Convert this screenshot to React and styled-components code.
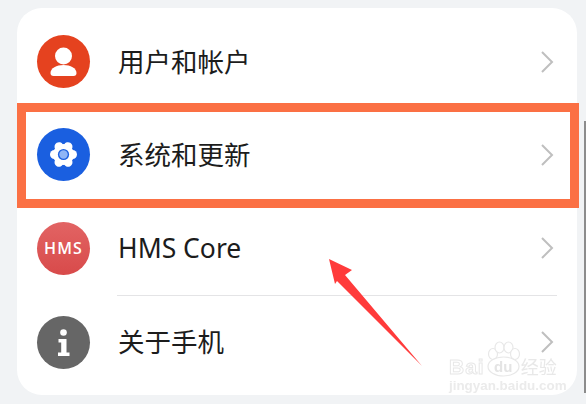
import React from 'react'
import styled, { createGlobalStyle } from 'styled-components'

// STYLES //
const GlobalStyle = createGlobalStyle`
  html, body {
    margin: 0;
    padding: 0;
    background: #f1f3f5;
  }
`;
const Page = styled.div`
  position: relative;
  box-sizing: border-box;
  width: 586px;
  height: 404px;
  padding: 8px 9px 9px 17px;
  overflow: hidden;
  background: #f1f3f5;
  font-family: "Noto Sans", "Noto Sans CJK SC", sans-serif;
`;
const Card = styled.div`
  display: flex;
  flex-direction: column;
  box-sizing: border-box;
  height: 100%;
  padding: 7px 0 6px;
  border-radius: 25px;
  background: #fff;
`;
const Row = styled.div`
  display: flex;
  flex: 1;
  align-items: center;
  gap: 27px;
  padding: 0 23px 0 20px;
`;
const IconCircle = styled.div`
  display: flex;
  flex-shrink: 0;
  align-items: center;
  justify-content: center;
  width: 53px;
  height: 53px;
  border-radius: 50%;
  background: ${(p) => p.$bg};
`;
const HmsText = styled.span`
  color: #fff;
  font-family: "Open Sans", sans-serif;
  font-size: 16px;
  font-weight: 600;
  letter-spacing: 1.1px;
`;
const Label = styled.div`
  flex: 1;
  padding-left: 1px;
  color: #1c1c1c;
  font-size: 26.5px;
  line-height: 32px;
`;
const Divider = styled.div`
  height: 1px;
  margin: 0 20px 0 100px;
  background: #e4e4e6;
`;
const Highlight = styled.div`
  position: absolute;
  top: 103px;
  left: 17px;
  box-sizing: border-box;
  width: 562px;
  height: 105px;
  border: 9px solid #fb7044;
`;
const Arrow = styled.svg`
  position: absolute;
  top: 255px;
  left: 325px;
`;
const EdgeStrip = styled.div`
  position: absolute;
  top: 121px;
  right: 0;
  width: 2px;
  height: 272px;
  background: #8c8c8c;
`;
const Watermark = styled.div`
  position: absolute;
  top: 341px;
  left: 449px;
  width: 108px;
  color: #fff;
  filter: blur(0.4px);
`;
const WatermarkTop = styled.div`
  display: flex;
  align-items: flex-end;
`;
const WatermarkBrand = styled.span`
  font-family: "Liberation Sans", sans-serif;
  font-size: 21px;
  font-weight: 700;
  line-height: 20px;
  letter-spacing: 1px;
  -webkit-text-stroke: 1px #e8e8e8;
`;
const WatermarkCn = styled.span`
  margin-left: -1px;
  font-size: 18px;
  font-weight: 400;
  line-height: 20px;
  color: #e8e8e8;
`;
const WatermarkUrl = styled.div`
  margin-top: 2px;
  color: #ebebeb;
  font-family: "Liberation Sans", sans-serif;
  font-size: 13.4px;
  font-weight: 700;
  line-height: 13px;
  white-space: nowrap;
`;

// ICONS //
const PersonIcon = () => (
  <svg width="53" height="53" viewBox="0 0 53 53">
    <circle cx="26.5" cy="21" r="8.5" fill="#fff" />
    <path d="M13.5 38c0-5 6-8 13-8s13 3 13 8c0 2-1 3-3 3H16.5c-2 0-3-1-3-3z" fill="#fff" />
  </svg>
);
const GearIcon = () => (
  <svg width="53" height="53" viewBox="0 0 53 53">
    {[0, 60, 120, 180, 240, 300].map((deg) => (
      <circle key={deg} cx="35.5" cy="26.5" r="4.5" fill="#fff" transform={`rotate(${deg} 26.5 26.5)`} />
    ))}
    <circle cx="26.5" cy="26.5" r="10.5" fill="#fff" />
    <circle cx="26.5" cy="26.5" r="5.6" fill="#1a5fe0" />
    <circle cx="26.5" cy="26.5" r="4.2" fill="#8fb5f6" />
  </svg>
);
const InfoIcon = () => (
  <svg width="53" height="53" viewBox="0 0 53 53">
    <circle cx="26.5" cy="16.5" r="3.3" fill="#fff" />
    <path d="M21.5 23h8v13.5h3V40H21v-3.5h3.2v-10h-2.7z" fill="#fff" />
  </svg>
);
const Chevron = () => (
  <svg width="14" height="24" viewBox="0 0 14 24">
    <path d="M2 2l10 10L2 22" fill="none" stroke="#bfbfbf" strokeWidth="2" />
  </svg>
);

const rows = [
  { label: '用户和帐户', bg: '#e5421f', icon: <PersonIcon /> },
  { label: '系统和更新', bg: '#1a5fe0', icon: <GearIcon /> },
  { label: 'HMS Core', bg: 'linear-gradient(#e26464, #d84a4a)', icon: <HmsText>HMS</HmsText>, divider: true },
  { label: '关于手机', bg: '#666666', icon: <InfoIcon /> },
];

// COMPONENT //
const App = () => {
  return (
    <Page>
      <GlobalStyle />
      <Card>
        {rows.map((row) => (
          <React.Fragment key={row.label}>
            <Row>
              <IconCircle $bg={row.bg}>{row.icon}</IconCircle>
              <Label>{row.label}</Label>
              <Chevron />
            </Row>
            {row.divider && <Divider />}
          </React.Fragment>
        ))}
      </Card>
      <Highlight />
      <EdgeStrip />
      <Arrow width="100" height="115" viewBox="0 0 100 115">
        <polygon points="4,4 27,15 20,20 97,111 12,26 10,29" fill="#ff3b3b" />
      </Arrow>
      <Watermark>
        <WatermarkTop>
          <WatermarkBrand>Bai</WatermarkBrand>
          <svg width="37" height="36" viewBox="0 0 37 36">
            <g fill="#fff" stroke="#e8e8e8" strokeWidth="1.2">
              <ellipse cx="8" cy="13" rx="4.5" ry="5.5" />
              <ellipse cx="14.5" cy="6.5" rx="4.5" ry="5.5" />
              <ellipse cx="23.5" cy="6.5" rx="4.5" ry="5.5" />
              <ellipse cx="30" cy="13" rx="4.5" ry="5.5" />
              <ellipse cx="18.5" cy="25.5" rx="15.5" ry="9.5" />
            </g>
            <text x="9" y="31" fontFamily="Liberation Sans, sans-serif" fontSize="15" fontWeight="700" fill="#e4e4e4">du</text>
          </svg>
          <WatermarkCn>经验</WatermarkCn>
        </WatermarkTop>
        <WatermarkUrl>jingyan.baidu.com</WatermarkUrl>
      </Watermark>
    </Page>
  );
};

export default App;
